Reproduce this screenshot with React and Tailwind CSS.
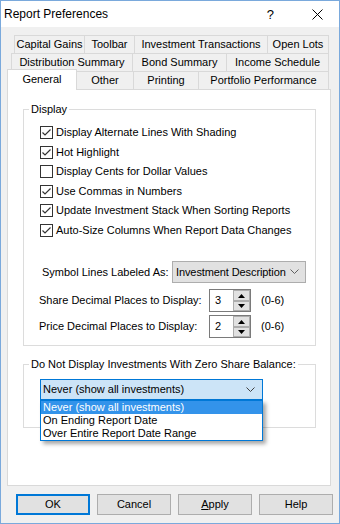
import React from "react";

function Check({ checked }) {
  return (
    <div className="w-[13px] h-[13px] border border-[#333333] bg-white flex items-center justify-center shrink-0">
      {checked && (
        <svg width="11" height="11" viewBox="0 0 11 11">
          <polyline points="1.5,5.5 4,8 9.5,2.5" fill="none" stroke="#333333" strokeWidth="1.2" />
        </svg>
      )}
    </div>
  );
}

function Chevron({ color }) {
  return (
    <svg width="9" height="6" viewBox="0 0 9 6">
      <polyline points="0.5,0.5 4.5,4.5 8.5,0.5" fill="none" stroke={color} strokeWidth="1" />
    </svg>
  );
}

function Spin({ value }) {
  return (
    <div className="w-[42px] h-[23px] border border-[#7a7a7a] bg-white flex">
      <div className="flex-1 pl-[5px] flex items-center">{value}</div>
      <div className="w-[17px] flex flex-col">
        <div className="h-[11px] bg-[#e1e1e1] border border-[#adadad] flex items-center justify-center">
          <svg width="7" height="4" viewBox="0 0 7 4"><polygon points="0,4 3.5,0 7,4" fill="#000" /></svg>
        </div>
        <div className="flex-1 bg-[#e1e1e1] border border-[#adadad] flex items-center justify-center">
          <svg width="7" height="4" viewBox="0 0 7 4"><polygon points="0,0 3.5,4 7,0" fill="#000" /></svg>
        </div>
      </div>
    </div>
  );
}

const checks = [
  { label: "Display Alternate Lines With Shading", on: true, h: "h-[19px]" },
  { label: "Hot Highlight", on: true, h: "h-[20px]" },
  { label: "Display Cents for Dollar Values", on: false, h: "h-[19px]" },
  { label: "Use Commas in Numbers", on: true, h: "h-[20px]" },
  { label: "Update Investment Stack When Sorting Reports", on: true, h: "h-[19px]" },
  { label: "Auto-Size Columns When Report Data Changes", on: true, h: "h-[20px]" },
];

export default function App() {
  return (
    <div className="w-[340px] h-[524px] border border-[#7aa9dc] bg-[#f0f0f0] flex flex-col text-[11px] leading-none text-black font-['Liberation_Sans',Arial,sans-serif] overflow-hidden">
      {/* Title bar */}
      <div className="h-[26px] bg-white flex items-center pl-[3px] shrink-0">
        <span className="text-[12px] font-['Liberation_Sans',Arial,sans-serif]">Report Preferences</span>
        <span className="ml-auto text-[13px] mr-[38px]">?</span>
        <svg className="mr-[16px]" width="11" height="11" viewBox="0 0 11 11">
          <line x1="0.5" y1="0.5" x2="10.5" y2="10.5" stroke="#000" strokeWidth="1" />
          <line x1="10.5" y1="0.5" x2="0.5" y2="10.5" stroke="#000" strokeWidth="1" />
        </svg>
      </div>

      <div className="flex-1 flex flex-col px-[6px]">
        {/* Tabs row 1 */}
        <div className="mt-[8px] ml-[7px] flex h-[18px]">
          <div className="w-[70px] border-l border-t border-[#d9d9d9] flex items-center justify-center">Capital Gains</div>
          <div className="w-[50px] border-l border-t border-[#d9d9d9] flex items-center justify-center">Toolbar</div>
          <div className="w-[133px] border-l border-t border-[#d9d9d9] flex items-center justify-center">Investment Transactions</div>
          <div className="w-[62px] border-l border-t border-r border-[#d9d9d9] flex items-center justify-center">Open Lots</div>
        </div>
        {/* Tabs row 2 */}
        <div className="ml-[4px] flex h-[18px]">
          <div className="w-[121px] border-l border-t border-[#d9d9d9] flex items-center justify-center">Distribution Summary</div>
          <div className="w-[94px] border-l border-t border-[#d9d9d9] flex items-center justify-center">Bond Summary</div>
          <div className="w-[103px] border-l border-t border-r border-[#d9d9d9] flex items-center justify-center">Income Schedule</div>
        </div>
        {/* Tabs row 3 */}
        <div className="-mt-[2px] flex items-start h-[20px] relative z-10">
          <div className="w-[70px] h-[21px] bg-white border-l border-t border-r border-[#d9d9d9] flex items-center justify-center pb-[1px]">General</div>
          <div className="mt-[2px] w-[57px] h-[18px] border-t border-r border-[#d9d9d9] flex items-center justify-center">Other</div>
          <div className="mt-[2px] w-[65px] h-[18px] border-t border-r border-[#d9d9d9] flex items-center justify-center">Printing</div>
          <div className="mt-[2px] w-[130px] h-[18px] border-t border-r border-[#d9d9d9] flex items-center justify-center">Portfolio Performance</div>
        </div>

        {/* Panel */}
        <div className="h-[397px] w-[324px] border border-[#d9d9d9] bg-white pl-[15px] pt-[13px]">
          <fieldset className="w-[293px] border border-[#dcdcdc] pl-[16px] pb-[7px]">
            <legend className="-ml-[11px] px-[2px] h-[13px] leading-[13px]">Display</legend>
            <div className="mt-[7px] flex flex-col">
              {checks.map((c) => (
                <div key={c.label} className={"flex items-center " + c.h}>
                  <Check checked={c.on} />
                  <span className="ml-[3px]">{c.label}</span>
                </div>
              ))}
            </div>
            <div className="mt-[21px] flex items-center h-[22px] -ml-[16px] pl-[18px]">
              <div className="w-[130px]">Symbol Lines Labeled As:</div>
              <div className="w-[134px] h-[22px] bg-[#e1e1e1] border border-[#adadad] flex items-center pl-[3px] pr-[6px]">
                <span className="tracking-[-0.1px]">Investment Description</span>
                <span className="ml-auto"><Chevron color="#606060" /></span>
              </div>
            </div>
            <div className="mt-[6px] flex items-center -ml-[16px] pl-[15px]">
              <div className="w-[170px]">Share Decimal Places to Display:</div>
              <Spin value="3" />
              <span className="ml-[10px]">(0-6)</span>
            </div>
            <div className="mt-[3px] flex items-center -ml-[16px] pl-[15px]">
              <div className="w-[170px]">Price Decimal Places to Display:</div>
              <Spin value="2" />
              <span className="ml-[10px]">(0-6)</span>
            </div>
          </fieldset>

          <fieldset className="mt-[12px] w-[293px] border border-[#dcdcdc] pl-[16px] pt-[8px] pb-[27px]">
            <legend className="-ml-[11px] px-[2px] h-[13px] leading-[13px]">Do Not Display Investments With Zero Share Balance:</legend>
            <div className="relative w-[223px]">
              <div className="h-[21px] bg-[#cce4f7] border border-[#0078d7] flex items-center pl-[2px] pr-[7px]">
                <span>Never (show all investments)</span>
                <span className="ml-auto"><Chevron color="#404040" /></span>
              </div>
              <div className="absolute left-0 top-full w-[223px] border border-[#0078d7] bg-white shadow-[3px_3px_4px_rgba(0,0,0,0.35)] z-20">
                <div className="h-[13px] leading-[13px] bg-[#3393ea] text-white pl-[2px]">Never (show all investments)</div>
                <div className="h-[13px] leading-[13px] pl-[2px]">On Ending Report Date</div>
                <div className="h-[13px] leading-[13px] pl-[2px]">Over Entire Report Date Range</div>
              </div>
            </div>
          </fieldset>
        </div>

        {/* Buttons */}
        <div className="mt-[8px] ml-[9px] flex gap-[7px]">
          <div className="w-[74px] h-[21px] bg-[#e1e1e1] border-2 border-[#0078d7] flex items-center justify-center">OK</div>
          <div className="w-[74px] h-[21px] bg-[#e1e1e1] border border-[#adadad] flex items-center justify-center">Cancel</div>
          <div className="w-[74px] h-[21px] bg-[#e1e1e1] border border-[#adadad] flex items-center justify-center"><span><span className="underline">A</span>pply</span></div>
          <div className="w-[74px] h-[21px] bg-[#e1e1e1] border border-[#adadad] flex items-center justify-center">Help</div>
        </div>
      </div>
    </div>
  );
}
